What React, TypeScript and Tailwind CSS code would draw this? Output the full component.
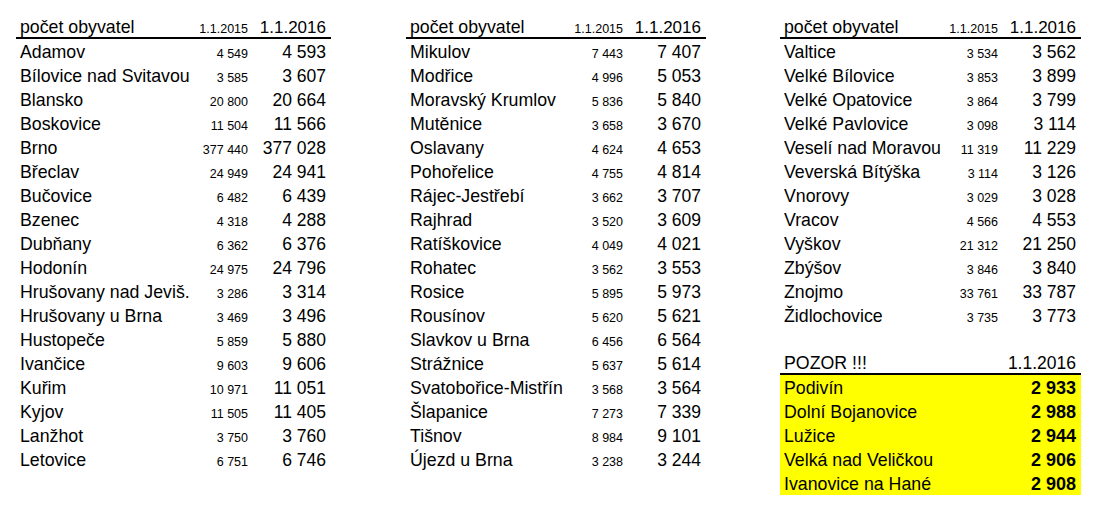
type Row = [string, string, string];

const col1: Row[] = [
  ["Adamov", "4 549", "4 593"],
  ["Bílovice nad Svitavou", "3 585", "3 607"],
  ["Blansko", "20 800", "20 664"],
  ["Boskovice", "11 504", "11 566"],
  ["Brno", "377 440", "377 028"],
  ["Břeclav", "24 949", "24 941"],
  ["Bučovice", "6 482", "6 439"],
  ["Bzenec", "4 318", "4 288"],
  ["Dubňany", "6 362", "6 376"],
  ["Hodonín", "24 975", "24 796"],
  ["Hrušovany nad Jeviš.", "3 286", "3 314"],
  ["Hrušovany u Brna", "3 469", "3 496"],
  ["Hustopeče", "5 859", "5 880"],
  ["Ivančice", "9 603", "9 606"],
  ["Kuřim", "10 971", "11 051"],
  ["Kyjov", "11 505", "11 405"],
  ["Lanžhot", "3 750", "3 760"],
  ["Letovice", "6 751", "6 746"],
];

const col2: Row[] = [
  ["Mikulov", "7 443", "7 407"],
  ["Modřice", "4 996", "5 053"],
  ["Moravský Krumlov", "5 836", "5 840"],
  ["Mutěnice", "3 658", "3 670"],
  ["Oslavany", "4 624", "4 653"],
  ["Pohořelice", "4 755", "4 814"],
  ["Rájec-Jestřebí", "3 662", "3 707"],
  ["Rajhrad", "3 520", "3 609"],
  ["Ratíškovice", "4 049", "4 021"],
  ["Rohatec", "3 562", "3 553"],
  ["Rosice", "5 895", "5 973"],
  ["Rousínov", "5 620", "5 621"],
  ["Slavkov u Brna", "6 456", "6 564"],
  ["Strážnice", "5 637", "5 614"],
  ["Svatobořice-Mistřín", "3 568", "3 564"],
  ["Šlapanice", "7 273", "7 339"],
  ["Tišnov", "8 984", "9 101"],
  ["Újezd u Brna", "3 238", "3 244"],
];

const col3: Row[] = [
  ["Valtice", "3 534", "3 562"],
  ["Velké Bílovice", "3 853", "3 899"],
  ["Velké Opatovice", "3 864", "3 799"],
  ["Velké Pavlovice", "3 098", "3 114"],
  ["Veselí nad Moravou", "11 319", "11 229"],
  ["Veverská Bítýška", "3 114", "3 126"],
  ["Vnorovy", "3 029", "3 028"],
  ["Vracov", "4 566", "4 553"],
  ["Vyškov", "21 312", "21 250"],
  ["Zbýšov", "3 846", "3 840"],
  ["Znojmo", "33 761", "33 787"],
  ["Židlochovice", "3 735", "3 773"],
];

const pozor: [string, string][] = [
  ["Podivín", "2 933"],
  ["Dolní Bojanovice", "2 988"],
  ["Lužice", "2 944"],
  ["Velká nad Veličkou", "2 906"],
  ["Ivanovice na Hané", "2 908"],
];

function Header() {
  return (
    <div className="flex items-baseline h-5 leading-[20px] border-b-2 border-black box-content whitespace-nowrap">
      <span className="flex-1 pl-1 text-[17.75px]">počet obyvatel</span>
      <span className="text-[12.5px] text-right">1.1.2015</span>
      <span className="w-[83px] pr-[5px] text-right text-[17px]">1.1.2016</span>
    </div>
  );
}

function Table({ rows, width }: { rows: Row[]; width: string }) {
  return (
    <div className={width}>
      <Header />
      {rows.map(([name, y2015, y2016]) => (
        <div key={name} className="flex items-baseline h-6 leading-[26px] whitespace-nowrap">
          <span className="flex-1 pl-1 text-[17.75px]">{name}</span>
          <span className="text-[12.5px] text-right">{y2015}</span>
          <span className="w-[83px] pr-[5px] text-right text-[17.5px]">{y2016}</span>
        </div>
      ))}
    </div>
  );
}

export default function App() {
  return (
    <div
      className="w-[1096px] h-[509px] bg-white text-black flex pl-4 pt-[17px]"
      style={{ fontFamily: '"Liberation Sans", Arial, sans-serif' }}
    >
      <Table rows={col1} width="w-[315px]" />
      <div className="ml-[75px]">
        <Table rows={col2} width="w-[300px]" />
      </div>
      <div className="ml-[74px] w-[301px]">
        <Table rows={col3} width="w-[301px]" />
        <div className="mt-[26px]">
          <div className="flex items-baseline h-5 leading-[20px] border-b-2 border-black box-content">
            <span className="flex-1 pl-1 text-[17.75px]">POZOR !!!</span>
            <span className="pr-[5px] text-right text-[17.5px]">1.1.2016</span>
          </div>
          <div className="bg-[#ffff00]">
            {pozor.map(([name, n]) => (
              <div key={name} className="flex items-baseline h-6 leading-[26px] whitespace-nowrap">
                <span className="flex-1 pl-1 text-[17.75px]">{name}</span>
                <span className="pr-[5px] text-right text-[18px] font-bold">{n}</span>
              </div>
            ))}
          </div>
        </div>
      </div>
    </div>
  );
}
